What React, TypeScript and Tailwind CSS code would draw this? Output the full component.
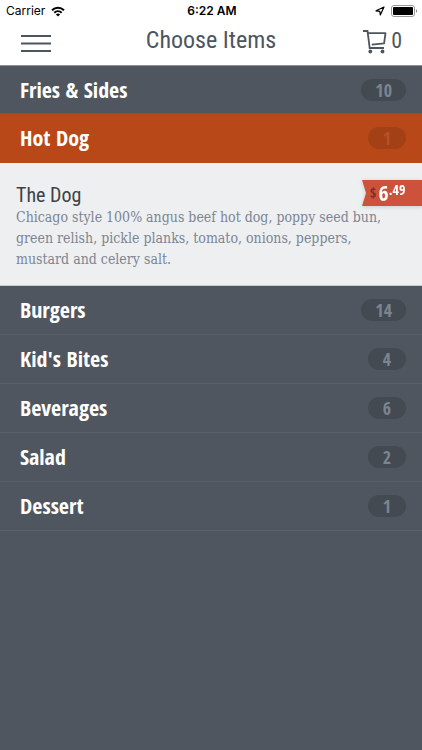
import { useState } from "react";
import clsx from "clsx";

type Item = {
  name: string;
  description: string;
  dollars: string;
  cents: string;
};

type Category = {
  name: string;
  count: number;
  items?: Item[];
};

const categories: Category[] = [
  { name: "Fries & Sides", count: 10 },
  {
    name: "Hot Dog",
    count: 1,
    items: [
      {
        name: "The Dog",
        description:
          "Chicago style 100% angus beef hot dog, poppy seed bun, green relish, pickle planks, tomato, onions, peppers, mustard and celery salt.",
        dollars: "6",
        cents: ".49",
      },
    ],
  },
  { name: "Burgers", count: 14 },
  { name: "Kid's Bites", count: 4 },
  { name: "Beverages", count: 6 },
  { name: "Salad", count: 2 },
  { name: "Dessert", count: 1 },
];

function StatusBar() {
  return (
    <div className="grid h-5 grid-cols-3 items-center pt-0.5 pl-1.5 pr-1 font-['Inter',sans-serif] text-xs text-black">
      <div className="flex items-center gap-1.5">
        <span>Carrier</span>
        <svg width="14" height="11" viewBox="0 0 14 11" fill="none" stroke="black" strokeWidth="2">
          <path d="M1 4.2C4.4.9 9.6.9 13 4.2" />
          <path d="M3.3 6.7c2.1-2 5.3-2 7.4 0" />
          <path d="M7 10.6 4.9 8.4c1.2-1.1 3-1.1 4.2 0z" fill="black" stroke="none" />
        </svg>
      </div>
      <span className="text-center font-semibold">6:22 AM</span>
      <div className="flex items-center justify-end gap-1.5">
        <svg width="10" height="10" viewBox="0 0 10 10" fill="none" stroke="black" strokeWidth="1.2" strokeLinejoin="round">
          <path d="M9 1 1 4.8l3.8.5L5.3 9z" />
        </svg>
        <svg width="27" height="12" viewBox="0 0 27 12">
          <rect x=".5" y=".5" width="23" height="11" rx="2.5" fill="white" stroke="#999" />
          <rect x="2" y="2" width="20" height="8" rx="1" fill="black" />
          <path d="M25 4.2c1.5.6 1.5 3 0 3.6z" fill="#888" />
        </svg>
      </div>
    </div>
  );
}

function Header() {
  return (
    <header className="grid h-[45px] grid-cols-[1fr_auto_1fr] items-center px-5 font-['Roboto_Condensed',sans-serif] text-[#4d555e]">
      <button type="button" aria-label="Menu" className="w-8">
        <svg width="32" height="18" viewBox="0 0 32 18" fill="none" stroke="currentColor" strokeWidth="2">
          <path d="M1 2h30M1 9.5h30M1 17h30" />
        </svg>
      </button>
      <h1 className="pb-1.5 text-2xl leading-8">Choose Items</h1>
      <button type="button" aria-label="Cart" className="flex items-start gap-1 justify-self-end pb-0.5">
        <svg width="25" height="25" viewBox="0 0 25 25" fill="none" stroke="currentColor" strokeWidth="1.8">
          <path d="M1 2h4.5l2.2 17H22" />
          <path d="M5.8 4.2h17.7l-1.4 10.2-12.3 1.3" strokeLinejoin="round" />
          <circle cx="8.3" cy="22.5" r="1.9" fill="currentColor" stroke="none" />
          <circle cx="20.5" cy="22.5" r="1.9" fill="currentColor" stroke="none" />
        </svg>
        <span className="text-[22px] leading-6">0</span>
      </button>
    </header>
  );
}

function MenuItem({ item }: { item: Item }) {
  return (
    <article className="border-b border-[#c5ced1] bg-[#eeeff1] pt-4 pb-[15px] pl-4">
      <div className="flex items-center justify-between">
        <h3 className="pt-1 font-['Roboto_Condensed',sans-serif] text-xl leading-6 text-[#3d4146]">{item.name}</h3>
        <div className="relative h-[26px] w-[60px] drop-shadow-sm">
          {/* Ribbon */}
          <svg className="absolute inset-0" width="60" height="26" viewBox="0 0 60 26" fill="#cd523c">
            <path d="M0 0h60v26H0l4-13z" />
          </svg>
          <p className="relative flex items-start gap-0.5 pl-2 font-bold text-white">
            <span className="text-sm leading-[26px] text-[#7f2f22]">$</span>
            <span className="flex items-start">
              <span className="text-[22px] leading-6">{item.dollars}</span>
              <span className="text-sm leading-5">{item.cents}</span>
            </span>
          </p>
        </div>
      </div>
      <p className="pr-9 font-['DejaVu_Serif_Condensed','DejaVu_Serif',serif] text-sm leading-[21px] text-[#7c8591]">
        {item.description}
      </p>
    </article>
  );
}

export default function App() {
  const [open, setOpen] = useState("Hot Dog");

  return (
    <div className="flex min-h-screen flex-col bg-[#4f565f] font-['Open_Sans_Condensed','Open_Sans',sans-serif]">
      <div className="bg-white">
        <StatusBar />
        <Header />
      </div>

      <main>
        {categories.map((category, index) => {
          const active = category.name === open;
          return (
            <section key={category.name}>
              <button
                type="button"
                aria-expanded={active}
                onClick={() => setOpen(active ? "" : category.name)}
                className={clsx(
                  "flex h-[49px] w-full items-center justify-between border-b pl-5 pr-4 font-bold",
                  index === 0 && "border-t border-t-[#8b9294]",
                  active ? "border-b-[#b84817] bg-[#b84817]" : "border-b-[#596069]"
                )}
              >
                <span className="pb-0.5 text-[22px] leading-7 text-white">{category.name}</span>
                <span
                  className={clsx(
                    "min-w-[38px] rounded-full px-3.5 text-lg leading-[22px]",
                    active ? "bg-[#a44015] text-[#bd4f20]" : "bg-[#434a52] text-[#7b8590]"
                  )}
                >
                  {category.count}
                </span>
              </button>

              {active && category.items?.map((item) => <MenuItem key={item.name} item={item} />)}
            </section>
          );
        })}
      </main>
    </div>
  );
}
